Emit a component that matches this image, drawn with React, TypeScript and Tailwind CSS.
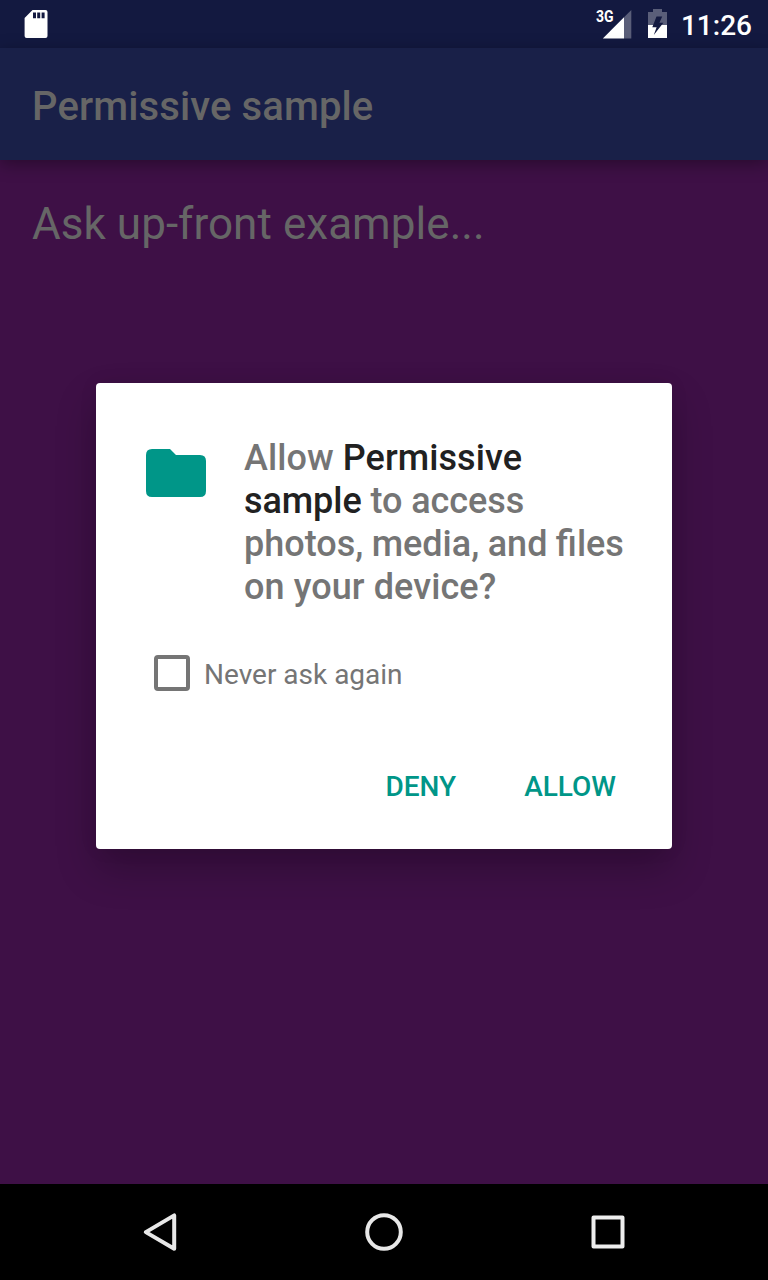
import React from "react";

function StatusBar() {
  return (
    <header className="flex h-12 shrink-0 items-start bg-[#131940] text-white">
      <svg className="mt-2.5 ml-6 h-7 w-6" viewBox="0 0 24 28">
        <path
          fill="#fff"
          fillRule="evenodd"
          d="M8.5 0H21.5Q23.5 0 23.5 2V26Q23.5 28 21.5 28H2.6Q.6 28 .6 26V8ZM9 2.6V8.3H12V2.6ZM13.2 2.6V8.3H16.2V2.6ZM17.6 2.6V8.3H20.6V2.6Z"
        />
      </svg>
      <div className="relative mt-2.5 ml-auto h-[29px] w-9">
        <svg className="h-full w-full" viewBox="0 0 36 29">
          <path fill="#5a5e79" d="M35.3 0V28.5H28V7.3Z" />
          <path fill="#fff" d="M28 7.3V28.5H6.8Z" />
        </svg>
        <span className="absolute top-0 left-0 text-[16.5px] leading-[14px] font-bold origin-left scale-x-[.85]">3G</span>
      </div>
      <svg className="mt-[9px] ml-4 h-[29px] w-[19px]" viewBox="0 0 19 29">
        <path fill="#5a5e79" d="M5 0H14V3H19V16H0V3H5Z" />
        <path fill="#fff" d="M0 16H19V29H0Z" />
        <path fill="#131940" d="M8.5 7.5H14.2L11.4 13.8H15.4L5.8 26L8.6 18.2H4.3Z" />
      </svg>
      <span className="mt-[9px] mr-4 ml-3.5 text-[28px] leading-[34px] font-medium">11:26</span>
    </header>
  );
}

function NavigationBar() {
  return (
    <nav className="flex h-24 shrink-0 items-center justify-center gap-44 bg-black">
      <svg className="h-12 w-12" viewBox="0 0 48 48" fill="none" stroke="#e8e8e8" strokeWidth="4" strokeLinejoin="round">
        <path d="M38.2 7.4V40.8L9.8 24.1Z" />
      </svg>
      <svg className="h-12 w-12" viewBox="0 0 48 48" fill="none" stroke="#e8e8e8" strokeWidth="4">
        <circle cx="24" cy="24" r="16.8" />
      </svg>
      <svg className="h-12 w-12" viewBox="0 0 48 48" fill="none" stroke="#eeeeee" strokeWidth="4" strokeLinejoin="round">
        <path d="M9.5 9.5H38.5V38.5H9.5Z" />
      </svg>
    </nav>
  );
}

function PermissionDialog() {
  return (
    <section
      role="dialog"
      className="flex h-[466px] w-[576px] flex-col rounded-[4px] bg-white text-[#757575] shadow-[0_20px_40px_rgba(0,0,0,0.24),0_0_20px_rgba(0,0,0,0.06)]"
    >
      <div className="flex pt-[54px]">
        <svg className="mt-3 ml-[50px] h-12 w-[60px] shrink-0" viewBox="0 0 60 48">
          <path
            fill="#009688"
            d="M6 0H24L30 6H54Q60 6 60 12V42Q60 48 54 48H6Q0 48 0 42V6Q0 0 6 0Z"
          />
        </svg>
        <p className="ml-[38px] w-[390px] text-[36px] leading-[43px] font-medium whitespace-nowrap">
          <span className="block tracking-[0.08px]">
            Allow <span className="text-[#212121]">Permissive</span>
          </span>
          <span className="block tracking-[-0.06px]">
            <span className="text-[#212121]">sample</span> to access
          </span>
          <span className="block [word-spacing:-0.5px]">photos, media, and files</span>
          <span className="block tracking-[0.1px]">on your device?</span>
        </p>
      </div>
      <label className="mt-[46px] ml-[58px] flex h-9 items-center">
        <span className="h-9 w-9 rounded-[4px] border-4 border-[#757575]" />
        <span className="ml-3.5 pt-0.5 text-[28px] leading-[33px]">Never ask again</span>
      </label>
      <div className="mt-auto mr-[56px] mb-[46px] flex justify-end gap-[68px] text-[28px] leading-[33px] font-medium text-[#009688]">
        <button>DENY</button>
        <button>ALLOW</button>
      </div>
    </section>
  );
}

export default function App() {
  return (
    <div className="relative flex h-[1280px] w-[768px] flex-col overflow-hidden bg-[#3e1046] font-[Roboto,sans-serif]">
      <StatusBar />
      <div className="z-0 flex h-28 shrink-0 items-center bg-[#192048] pt-1.5 pl-8 text-[40px] font-medium tracking-[0.12px] text-[#666666] shadow-[0_4px_16px_rgba(0,0,0,0.35)]">
        <h1>Permissive sample</h1>
      </div>
      <main className="flex-1 px-8 pt-[38px] text-[44px] leading-[52px] tracking-[0.05px] text-[#666666]">
        Ask up-front example...
      </main>
      <NavigationBar />
      <div className="absolute inset-x-0 top-12 bottom-24 flex items-center justify-center">
        <PermissionDialog />
      </div>
    </div>
  );
}
